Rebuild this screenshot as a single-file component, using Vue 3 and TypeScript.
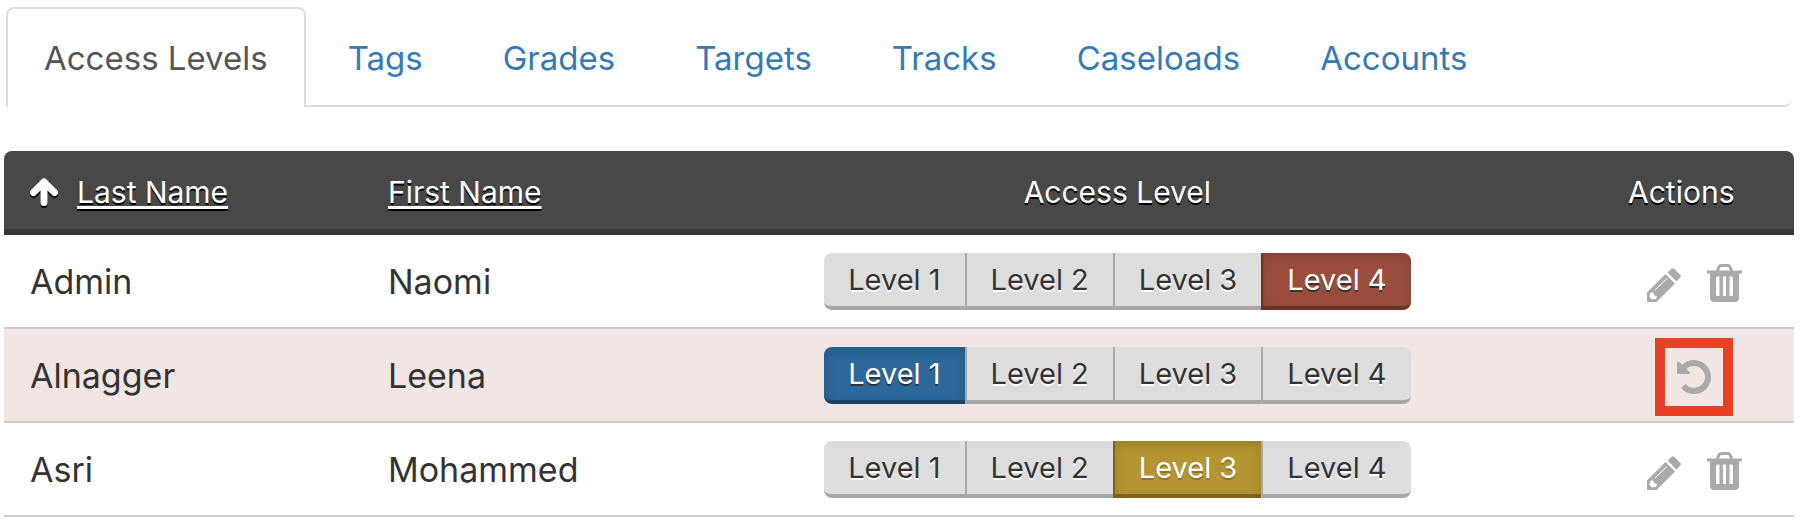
<script setup lang="ts">
import { ref } from 'vue'

interface Person {
  last: string
  first: string
  level: number
  changed: boolean
}

const tabs = ['Access Levels', 'Tags', 'Grades', 'Targets', 'Tracks', 'Caseloads', 'Accounts']
const activeTab = ref(tabs[0])
const levels = [1, 2, 3, 4]

const people = ref<Person[]>([
  { last: 'Admin', first: 'Naomi', level: 4, changed: false },
  { last: 'Alnagger', first: 'Leena', level: 1, changed: true },
  { last: 'Asri', first: 'Mohammed', level: 3, changed: false },
])
</script>

<template>
  <main class="page">
    <nav class="tabs">
      <a
        v-for="tab in tabs"
        :key="tab"
        href="#"
        class="tab"
        :class="{ active: tab === activeTab }"
        @click.prevent="activeTab = tab"
      >{{ tab }}</a>
    </nav>

    <table class="people">
      <thead>
        <tr>
          <th class="col-last">
            <div class="sorted">
              <svg class="arrow" viewBox="0 0 28 28" aria-hidden="true">
                <path d="M3.500 14.500 14 4 24.500 14.500M14 5V24.500" />
              </svg>
              <a href="#">Last Name</a>
            </div>
          </th>
          <th class="col-first"><a href="#">First Name</a></th>
          <th class="center">Access Level</th>
          <th class="col-actions center">Actions</th>
        </tr>
      </thead>
      <tbody>
        <tr v-for="p in people" :key="p.last" :class="{ changed: p.changed }">
          <td>{{ p.last }}</td>
          <td>{{ p.first }}</td>
          <td>
            <div class="levels">
              <button
                v-for="n in levels"
                :key="n"
                type="button"
                class="level"
                :class="p.level === n ? ['on', 'level-' + n] : []"
                :aria-pressed="p.level === n"
                @click="p.level = n"
              >Level {{ n }}</button>
            </div>
          </td>
          <td>
            <div class="actions">
              <button v-if="p.changed" type="button" class="icon undo" aria-label="Undo">
                <svg viewBox="0 0 34 34" width="34" height="34" aria-hidden="true">
                  <path class="ring" d="M7.100 7.100A14 14 0 1 1 6.300 26" />
                  <path d="M0 2.500Q0.500 0.800 2.200 1.700L12.500 12Q13.600 14 11.500 14H1.500Q0 14 0 12.500Z" />
                </svg>
              </button>
              <template v-else>
                <button type="button" class="icon" aria-label="Edit">
                  <svg viewBox="0 0 34 38" width="34" height="38" aria-hidden="true">
                    <path fill-rule="evenodd" d="M0 28.500 18.500 10 28 19.500 9.500 38H0ZM3 29.500 2.500 33 5 35.500 9 35 10 32 7.500 31.500 7 29.500 4.500 28Z" />
                    <path d="M20.500 8.500 24.500 4.800Q26 3.500 27.500 5L33.200 10.800Q34.500 12.300 33.200 13.800L29.500 17.500Z" />
                    <path class="shine" d="M7.500 26.500 20 14.500" />
                  </svg>
                </button>
                <button type="button" class="icon" aria-label="Delete">
                  <svg viewBox="0 0 35 38" width="35" height="38" aria-hidden="true">
                    <path fill-rule="evenodd" d="M0 6.500H9L10.500 2.500Q11.500 0 14 0H21Q23.500 0 24.500 2.500L26 6.500H35V9.500H32V33.500Q32 38 27.500 38H7.500Q3 38 3 33.500V9.500H0ZM12 6.500H23L22 4Q21.600 3 20.500 3H14.500Q13.400 3 13 4ZM9 14V30.500Q9 32 10.500 32H12.500V12.500H10.500Q9 12.500 9 14ZM16 12.500V32H19V12.500ZM22.500 12.500V32H24.500Q26 32 26 30.500V14Q26 12.500 24.500 12.500Z" />
                  </svg>
                </button>
              </template>
            </div>
          </td>
        </tr>
      </tbody>
    </table>
  </main>
</template>

<style>
body {
  margin: 0;
  background: #fff;
}
</style>

<style scoped>
.page {
  padding: 7px 6px 0 4px;
  font-family: Inter, "Liberation Sans", sans-serif;
  font-size: 34px;
  color: #333;
}

.tabs {
  display: flex;
  gap: 4px;
  margin: 0 2px;
  border-bottom: 2px solid #ddd;
  border-radius: 0 0 8px 0;
  font-size: 33px;
}

.tab {
  padding: 25px 36px 23px;
  border: 2px solid transparent;
  border-bottom: 0;
  border-radius: 8px 8px 0 0;
  line-height: 48px;
  white-space: nowrap;
  color: #337ab7;
  text-decoration: none;
}

.tab.active {
  margin-bottom: -2px;
  border-color: #ddd;
  background: #fff;
  color: #555;
}

.people {
  width: 100%;
  margin-top: 44px;
  border-collapse: separate;
  border-spacing: 0;
  table-layout: fixed;
}

.col-last { width: 20%; }
.col-first { width: 17%; }
.col-actions { width: 12.6%; }

th {
  box-sizing: border-box;
  height: 84px;
  padding: 4px 0 0 26px;
  border-bottom: 6px solid #373737;
  background: #484848;
  color: #fff;
  font-size: 30px;
  font-weight: 400;
  text-align: left;
  text-shadow: 0 2px 0 #000;
  white-space: nowrap;
}

th:first-child { border-top-left-radius: 8px; }
th:last-child { border-top-right-radius: 8px; }

th.center {
  padding-left: 0;
  text-align: center;
}

th a {
  color: inherit;
  text-decoration: underline;
  text-decoration-thickness: 3px;
  text-underline-offset: 3px;
  text-decoration-skip-ink: none;
}

.sorted {
  display: flex;
  align-items: center;
  gap: 19px;
}

.arrow {
  width: 28px;
  height: 28px;
  fill: none;
  stroke: #fff;
  stroke-width: 7;
  stroke-linecap: round;
  stroke-linejoin: round;
  filter: drop-shadow(0 2px 0 #000);
}

td {
  box-sizing: border-box;
  height: 94px;
  padding: 0 0 0 26px;
  border-bottom: 2px solid #ccc;
}

td:nth-child(3) { padding: 0; }
.changed td { background: #f2e6e4; }

.levels {
  display: flex;
  justify-content: center;
}

.level {
  padding: 0 24px;
  border: 0;
  border-bottom: 4px solid #a7a7a7;
  background: #ddd;
  color: #333;
  font: 29px/53px Inter, "Liberation Sans", sans-serif;
  text-shadow: 0 2px 0 #fff;
  white-space: nowrap;
}

.level + .level { border-left: 2px solid #aaa; }
.level:first-child { border-radius: 8px 0 0 8px; }
.level:last-child { border-radius: 0 8px 8px 0; }

.level.on {
  color: #fff;
  text-shadow: 0 2px 0 #333;
  box-shadow: inset 0 4px 12px rgba(0, 0, 0, 0.15);
}

.level.level-1 {
  border-color: #1d4466;
  background: #2c6899;
}

.level.level-3 {
  border-color: #7c631c;
  background: #b59532;
  text-shadow: 0 2px 0 #8f7528;
}

.level.level-4 {
  border-color: #6b3127;
  background: #9b4d3d;
}

.actions {
  display: flex;
  align-items: center;
  justify-content: center;
  gap: 26px;
  padding-top: 4px;
}

.icon {
  display: flex;
  padding: 0;
  border: 0;
  background: none;
}

.icon svg { fill: #aaa; }

.undo {
  padding: 12px;
  border: 10px solid #ea4025;
}

.icon .ring {
  fill: none;
  stroke: #aaa;
  stroke-width: 6;
}

.icon .shine {
  fill: none;
  stroke: #fff;
  stroke-width: 1;
}
</style>
